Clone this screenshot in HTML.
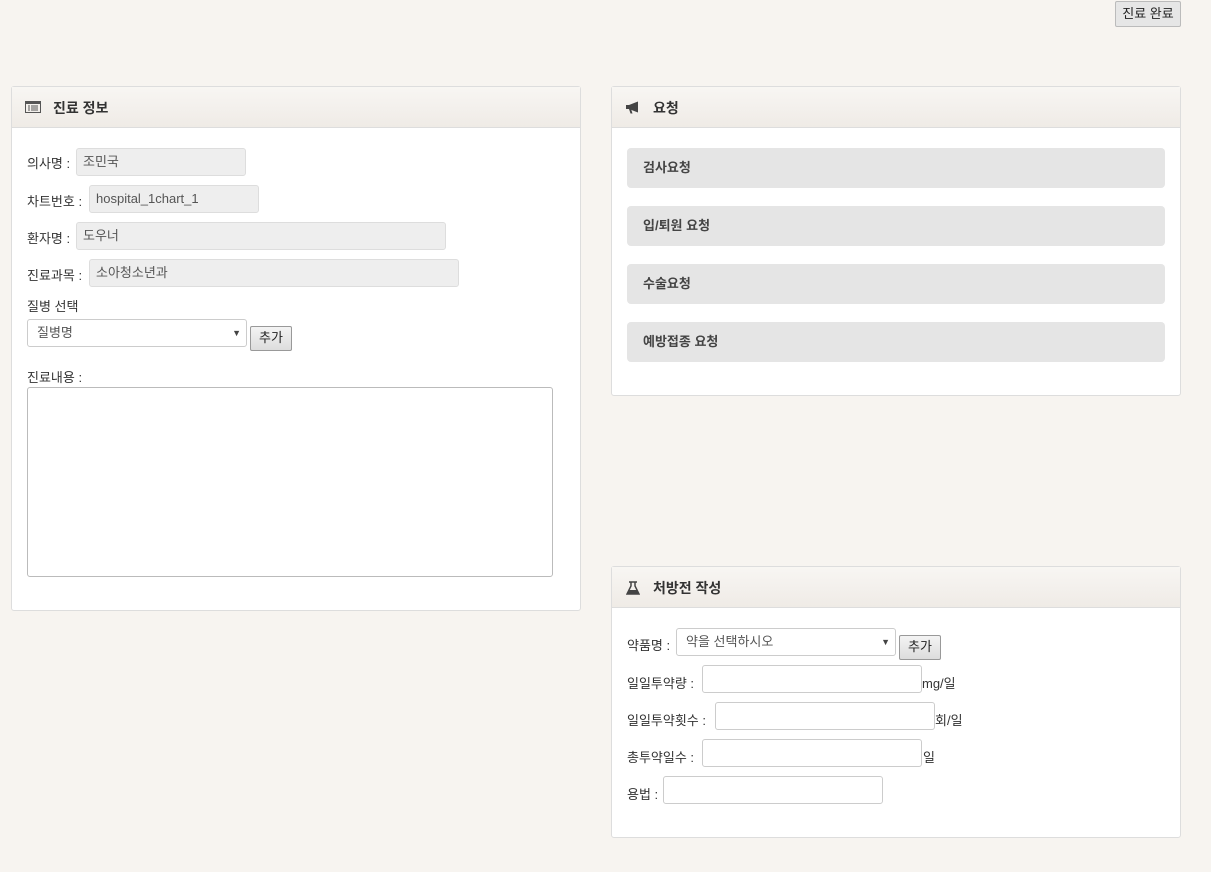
<!DOCTYPE html>
<html><head><meta charset="utf-8"><style>
body{margin:0;width:1211px;height:872px;background:#f7f4f0;font-family:"Liberation Sans","Noto Sans CJK KR",sans-serif;font-size:13px;color:#333;position:relative;overflow:hidden}
.a{position:absolute}
.panel{position:absolute;background:#fff;border:1px solid #ddd;border-radius:3px;box-sizing:border-box}
.hd{height:41px;background:linear-gradient(#f8f6f3,#efebe6);border-bottom:1px solid #ddd;box-sizing:border-box;font-weight:bold;font-size:14px;line-height:42px;padding-left:41px;position:relative;color:#333}
.inp{position:absolute;box-sizing:border-box;border:1px solid #ccc;border-radius:3px;background:#fff;padding-left:6px;line-height:26px;font-size:13px;color:#555}
.ro{background:#eee;border-color:#ddd}
.btn{position:absolute;box-sizing:border-box;border:1px solid #999;border-radius:2px;background:linear-gradient(#f4f4f4,#ddd);font-size:13px;text-align:center;line-height:22px;color:#222}
.req{position:absolute;left:15px;width:538px;height:40px;background:#e5e5e5;border-radius:4px;font-weight:bold;line-height:40px;padding-left:16px;box-sizing:border-box;color:#444}
.lb{position:absolute;white-space:nowrap;margin-top:-2px}
.arr{position:absolute;right:5px;top:0;font-size:9px;color:#444}
</style></head><body>
<div class="btn" style="left:1115px;top:1px;width:66px;height:26px;line-height:24px;border-color:#bbb;background:#e6e6e6">진료 완료</div>

<div class="panel" style="left:11px;top:86px;width:570px;height:525px">
<div class="hd"><svg class="a" style="left:13px;top:14px" width="16" height="12" viewBox="0 0 16 12"><rect x="0.5" y="0.5" width="15" height="11" fill="none" stroke="#555"/><rect x="1" y="1" width="14" height="2" fill="#555"/><path d="M3 5h2M3 7h2M3 9h2M6 5h7M6 7h7M6 9h7" stroke="#555"/></svg>진료 정보</div>
</div>
<div class="lb" style="left:27px;top:155px">의사명 :</div>
<div class="inp ro" style="left:76px;top:148px;width:170px;height:28px">조민국</div>
<div class="lb" style="left:27px;top:193px">차트번호 :</div>
<div class="inp ro" style="left:89px;top:185px;width:170px;height:28px">hospital_1chart_1</div>
<div class="lb" style="left:27px;top:230px">환자명 :</div>
<div class="inp ro" style="left:76px;top:222px;width:370px;height:28px">도우너</div>
<div class="lb" style="left:27px;top:267px">진료과목 :</div>
<div class="inp ro" style="left:89px;top:259px;width:370px;height:28px">소아청소년과</div>
<div class="lb" style="left:27px;top:298px">질병 선택</div>
<div class="inp" style="left:27px;top:319px;width:220px;height:28px;padding-left:9px">질병명<span class="arr">▼</span></div>
<div class="btn" style="left:250px;top:326px;width:42px;height:25px">추가</div>
<div class="lb" style="left:27px;top:369px">진료내용 :</div>
<div class="inp" style="left:27px;top:387px;width:526px;height:190px;border-color:#bbb"></div>

<div class="panel" style="left:611px;top:86px;width:570px;height:310px">
<div class="hd"><svg class="a" style="left:13px;top:14px" width="16" height="13" viewBox="0 0 16 13"><path d="M1 4h3l9-3.5v11L4 8H1z" fill="#444"/><path d="M4 8l1.5 4.5h2L6 8" fill="#444"/></svg>요청</div>
<div class="req" style="top:61px">검사요청</div>
<div class="req" style="top:119px">입/퇴원 요청</div>
<div class="req" style="top:177px">수술요청</div>
<div class="req" style="top:235px">예방접종 요청</div>
</div>

<div class="panel" style="left:611px;top:566px;width:570px;height:272px">
<div class="hd"><svg class="a" style="left:14px;top:14px" width="14" height="14" viewBox="0 0 14 14"><path d="M3 1h8M5 1v4L1 13h12L9 5V1" fill="none" stroke="#444" stroke-width="1.5"/><path d="M3 9h8l2 4H1z" fill="#444"/></svg>처방전 작성</div>
</div>
<div class="lb" style="left:627px;top:637px">약품명 :</div>
<div class="inp" style="left:676px;top:628px;width:220px;height:28px;padding-left:9px">약을 선택하시오<span class="arr">▼</span></div>
<div class="btn" style="left:899px;top:635px;width:42px;height:25px">추가</div>
<div class="lb" style="left:627px;top:675px">일일투약량 :</div>
<div class="inp" style="left:702px;top:665px;width:220px;height:28px"></div>
<div class="lb" style="left:922px;top:675px">mg/일</div>
<div class="lb" style="left:627px;top:712px">일일투약횟수 :</div>
<div class="inp" style="left:715px;top:702px;width:220px;height:28px"></div>
<div class="lb" style="left:935px;top:712px">회/일</div>
<div class="lb" style="left:627px;top:749px">총투약일수 :</div>
<div class="inp" style="left:702px;top:739px;width:220px;height:28px"></div>
<div class="lb" style="left:923px;top:749px">일</div>
<div class="lb" style="left:627px;top:786px">용법 :</div>
<div class="inp" style="left:663px;top:776px;width:220px;height:28px"></div>
</body></html>
